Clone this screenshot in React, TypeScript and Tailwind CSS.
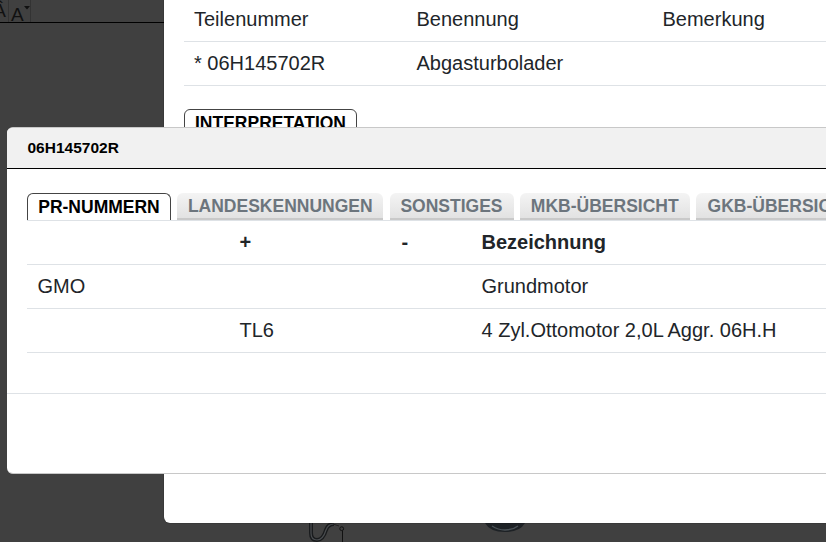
export default function App() {
  const tabs = [
    { label: "LANDESKENNUNGEN", w: "w-[206px]" },
    { label: "SONSTIGES", w: "w-[124px]" },
    { label: "MKB-ÜBERSICHT", w: "w-[170px]" },
    { label: "GKB-ÜBERSICHT", w: "w-[170px]" },
  ];
  return (
    <div className="relative w-[826px] h-[542px] overflow-hidden bg-[#404040] font-['Liberation_Sans',Arial,sans-serif] text-[#212529]">
      {/* toolbar */}
      <div className="h-[23px] w-[164px] border-b border-black flex items-end">
        <div className="h-[22px] w-[9px] border-r border-[#333] flex items-start justify-end overflow-hidden text-[#111] text-[19px] leading-none pt-[1px]">
          <span className="pr-[2px]">Â</span>
        </div>
        <div className="h-[22px] w-[22px] border-r border-[#333] flex items-start pl-[2px] pt-[5px] text-[#111] text-[19px] leading-none">
          <span>A</span>
          <svg width="6" height="4" viewBox="0 0 6 4" className="mt-[1px]">
            <path d="M0 0h6L3 3.5z" fill="#111" />
          </svg>
        </div>
      </div>

      {/* drawing peeking out below the panel */}
      <svg className="absolute left-[300px] top-[520px]" width="240" height="22" viewBox="0 0 240 22" fill="none">
        <path d="M11 3V13Q11 20 17 20Q23 20 26 10Q28 4 34 4" stroke="#191b1d" strokeWidth="4" />
        <path d="M11 3V13Q11 20 17 20Q23 20 26 10Q28 4 34 4" stroke="#4a4d50" strokeWidth="1.2" />
        <path d="M33 4l6 2" stroke="#222" strokeWidth="1" />
        <circle cx="41.7" cy="8.7" r="1.9" stroke="#111" strokeWidth="1" />
        <path d="M42.5 11v11" stroke="#111" strokeWidth="1" />
        <path d="M185 3Q190 12 205 12Q220 12 225 3z" fill="#1d2125" />
        <path d="M192 6Q198 10 205 10Q213 10 218 6" stroke="#4b5257" strokeWidth="1.5" />
      </svg>

      {/* panel behind */}
      <div className="absolute left-[164px] top-0 w-[700px] h-[523px] bg-white rounded-bl-[6px] px-[20px] text-[20px] shadow-[0_0_1px_#000]">
        <div className="flex h-[42px] items-center border-b border-[#dee2e6] leading-none pb-[3px]">
          <div className="w-[232.5px] pl-[10px]">Teilenummer</div>
          <div className="w-[246px]">Benennung</div>
          <div>Bemerkung</div>
        </div>
        <div className="flex h-[44px] items-center border-b border-[#dee2e6] leading-none pb-[1px]">
          <div className="w-[232.5px] pl-[10px]">* 06H145702R</div>
          <div>Abgasturbolader</div>
        </div>
        <div className="mt-[23px] w-[173px] h-[30px] border border-[#444] rounded-t-[6px] text-[17.5px] font-bold text-black text-center pt-[3px] leading-[20px]">
          INTERPRETATION
        </div>
      </div>

      {/* modal */}
      <div className="absolute left-[7px] top-[127px] w-[860px] h-[347px] bg-white rounded-[6px] flex flex-col overflow-hidden border-y border-[#c8c8c8]">
        <div className="h-[41px] shrink-0 bg-[#f1f1f1] border-b border-black pl-[20.5px] flex items-center text-[15.5px] font-bold text-black">
          06H145702R
        </div>
        <div className="h-[225px] shrink-0 border-b border-[#dee2e6] pl-[20px] pt-[24px]">
          <div className="flex gap-[6.25px] h-[28px] border-b border-[#dee2e6] overflow-hidden">
            <div className="w-[144px] h-[28px] border border-[#444] border-b-0 rounded-t-[6px] bg-white text-[17.5px] font-bold text-black text-center leading-[26px]">
              PR-NUMMERN
            </div>
            {tabs.map((t) => (
              <div
                key={t.label}
                className={`${t.w} shrink-0 h-[27px] rounded-t-[6px] bg-gradient-to-b from-[#f4f4f4] to-[#e2e2e2] border-b-2 border-[#c9c9c9] text-[17.5px] font-bold text-[#6c757d] text-center leading-[26px] whitespace-nowrap`}
              >
                {t.label}
              </div>
            ))}
          </div>
          <div className="text-[20px] leading-none">
            <div className="flex items-center h-[44px] border-b border-[#dee2e6] font-bold pb-[1px]">
              <div className="w-[212.5px] pl-[11px]" />
              <div className="w-[162px]">+</div>
              <div className="w-[80px]">-</div>
              <div>Bezeichnung</div>
            </div>
            <div className="flex items-center h-[44px] border-b border-[#dee2e6] pb-[1px]">
              <div className="w-[212.5px] pl-[10.5px]">GMO</div>
              <div className="w-[162px]" />
              <div className="w-[80px]" />
              <div>Grundmotor</div>
            </div>
            <div className="flex items-center h-[44px] border-b border-[#dee2e6] pb-[1px]">
              <div className="w-[212.5px] pl-[11px]" />
              <div className="w-[162px]">TL6</div>
              <div className="w-[80px]" />
              <div>4 Zyl.Ottomotor 2,0L Aggr. 06H.H</div>
            </div>
          </div>
        </div>
      </div>
    </div>
  );
}
